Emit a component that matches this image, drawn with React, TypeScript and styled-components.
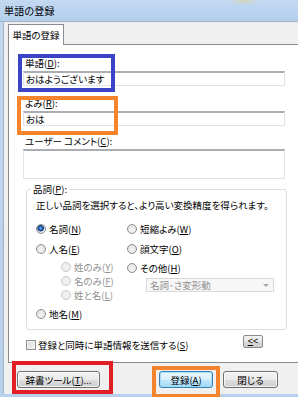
import React from "react";
import styled, { createGlobalStyle } from "styled-components";

const Global = createGlobalStyle`
  html, body { margin: 0; padding: 0; background: #fff; }
  body { font-family: "Noto Sans CJK JP", "Noto Sans", sans-serif; }
  * { box-sizing: border-box; }
`;

const Window = styled.div`
  position: relative;
  width: 298px;
  height: 397px;
  overflow: hidden;
  background: linear-gradient(180deg, #c3d8ef 0%, #b7d0ec 100%);
  display: flex;
  flex-direction: column;
  font-size: 9.5px;
  font-feature-settings: "palt";
  color: #000;
`;

const TitleBar = styled.div`
  height: 22px;
  flex: none;
  display: flex;
  align-items: center;
  padding-left: 4px;
  font-size: 10px;
  background:
    radial-gradient(ellipse 16px 4px at 244px 1px, rgba(226, 212, 160, 0.6), rgba(226, 212, 160, 0) 100%),
    linear-gradient(180deg, #c4d9f1 0%, #b9d3f0 60%, #b3cdeb 100%);
  border-bottom: 1px solid #9fb3c9;
  letter-spacing: 0.2px;
`;

const Client = styled.div`
  margin-left: 3px;
  flex: none;
  height: 372px;
  background: #f0f0f0;
  border-left: 1px solid #a3b3c4;
  display: flex;
  flex-direction: column;
  padding-left: 4px;
`;

const TabStrip = styled.div`
  height: 22px;
  display: flex;
  align-items: flex-end;
`;

const Tab = styled.div`
  width: 56px;
  height: 21px;
  background: #fff;
  border: 1px solid #898c95;
  border-bottom: none;
  margin-bottom: -1px;
  position: relative;
  z-index: 1;
  display: flex;
  align-items: center;
  justify-content: center;
  padding-bottom: 1px;
`;

const Panel = styled.div`
  height: 319px;
  background: #fff;
  border-top: 1px solid #898c95;
  border-left: 1px solid #898c95;
  border-bottom: 1px solid #898c95;
  padding: 11px 0 0 14px;
  display: flex;
  flex-direction: column;
`;

const FieldLabel = styled.div<{ $gapTop?: number }>`
  height: 14px;
  line-height: 14px;
  padding-left: 2px;
  margin-top: ${(p) => p.$gapTop ?? 0}px;
  margin-bottom: 1px;
`;

const TextInput = styled.div<{ $h?: number }>`
  width: 262px;
  height: ${(p) => p.$h ?? 15}px;
  background: #fff;
  border: 1px solid #e2e3ea;
  border-top-color: #abadb3;
  border-top-width: 2px;
  line-height: 12px;
  padding-left: 2px;
  font-size: 9.5px;
`;

const GroupBox = styled.fieldset`
  margin: 3px 0 0 3px;
  width: 261px;
  height: 148px;
  border: 1px solid #d5dfe5;
  border-radius: 3px;
  padding: 2px 0 0 9px;
  min-width: 0;
`;

const Legend = styled.legend`
  margin-left: -5px;
  padding: 0 2px;
  height: 14px;
  line-height: 14px;
`;

const Description = styled.div`
  line-height: 14px;
  height: 14px;
`;

const Columns = styled.div`
  display: flex;
  margin-top: 10px;
`;

const Column = styled.div<{ $w?: number }>`
  display: flex;
  flex-direction: column;
  width: ${(p) => (p.$w ? `${p.$w}px` : "auto")};
  flex: none;
`;

const OptionRow = styled.div<{ $top?: number; $indent?: number; $disabled?: boolean }>`
  display: flex;
  align-items: center;
  height: 14px;
  gap: 3px;
  margin-top: ${(p) => p.$top ?? 0}px;
  margin-left: ${(p) => p.$indent ?? 0}px;
  color: ${(p) => (p.$disabled ? "#8f8f8f" : "#000")};
`;

const RadioDot = styled.span<{ $checked?: boolean; $disabled?: boolean }>`
  width: 10px;
  height: 10px;
  border-radius: 50%;
  flex: none;
  border: 1px solid ${(p) => (p.$disabled ? "#c9c9c9" : "#8e8f91")};
  background: ${(p) =>
    p.$checked
      ? "radial-gradient(circle at 45% 40%, #8ac0f0 0, #2c6cc0 1.5px, #173f7e 3px, #e6e6e6 3.6px, #f4f4f4 100%)"
      : p.$disabled
      ? "radial-gradient(circle, #f3f3f3 0, #e9e9e9 100%)"
      : "radial-gradient(circle at 50% 60%, #f6f6f6 0, #dcdcdc 100%)"};
`;

const CheckBoxBox = styled.span`
  width: 10px;
  height: 10px;
  flex: none;
  border: 1px solid #8e8f91;
  background: linear-gradient(135deg, #dcdcdc 0%, #f4f4f4 100%);
  box-shadow: inset 0 0 0 1px #f3f3f3;
`;

const Select = styled.div`
  margin: 3px 0 0 19px;
  width: 128px;
  height: 14px;
  border: 1px solid #d9d9d9;
  background: #f7f7f7;
  color: #8f8f8f;
  display: flex;
  align-items: center;
  padding-left: 3px;
  justify-content: space-between;
  padding-right: 4px;
`;

const Arrow = styled.span`
  width: 0;
  height: 0;
  border-left: 3px solid transparent;
  border-right: 3px solid transparent;
  border-top: 3px solid #a8a8a8;
`;

const CheckRow = styled.div`
  display: flex;
  align-items: center;
  margin: 7px 0 0 3px;
  width: 237px;
  height: 16px;
  gap: 2px;
`;

const SmallButton = styled.div`
  margin-left: auto;
  align-self: flex-start;
  margin-top: -2px;
  width: 20px;
  height: 13px;
  border: 1px solid #8a8a8a;
  border-radius: 2px;
  background: linear-gradient(180deg, #f4f4f4 0%, #e8e8e8 50%, #d9d9d9 51%, #cdcdcd 100%);
  display: flex;
  align-items: center;
  justify-content: center;
  font-size: 9px;
  line-height: 9px;
  font-family: "Liberation Sans", sans-serif;
`;

const ButtonRow = styled.div`
  flex: 1;
  display: flex;
  align-items: flex-start;
  padding: 8px 20px 0 9px;
`;

const Button = styled.div<{ $w: number; $primary?: boolean; $left?: number }>`
  width: ${(p) => p.$w}px;
  height: 17px;
  margin-left: ${(p) => p.$left ?? 0}px;
  border-radius: 3px;
  border: 1px solid ${(p) => (p.$primary ? "#3c7fb1" : "#707070")};
  background: ${(p) =>
    p.$primary
      ? "linear-gradient(180deg, #eaf6fd 0%, #d9f0fc 50%, #bee6fd 51%, #a7d9f5 100%)"
      : "linear-gradient(180deg, #f2f2f2 0%, #ebebeb 50%, #dddddd 51%, #cfcfcf 100%)"};
  box-shadow: inset 0 0 0 1px ${(p) => (p.$primary ? "rgba(150,220,250,0.8)" : "rgba(255,255,255,0.7)")};
  display: flex;
  align-items: center;
  justify-content: center;
`;

const Mark = styled.div<{ $x: number; $y: number; $w: number; $h: number; $c: string }>`
  position: absolute;
  left: ${(p) => p.$x}px;
  top: ${(p) => p.$y}px;
  width: ${(p) => p.$w}px;
  height: ${(p) => p.$h}px;
  border: 4px solid ${(p) => p.$c};
  pointer-events: none;
`;

function Radio({
  label,
  checked,
  disabled,
  top,
  indent,
}: {
  label: React.ReactNode;
  checked?: boolean;
  disabled?: boolean;
  top?: number;
  indent?: number;
}) {
  return (
    <OptionRow $top={top} $indent={indent} $disabled={disabled}>
      <RadioDot $checked={checked} $disabled={disabled} />
      <span>{label}</span>
    </OptionRow>
  );
}

export default function App() {
  return (
    <>
      <Global />
      <Window>
        <TitleBar>単語の登録</TitleBar>
        <Client>
          <TabStrip>
            <Tab>単語の登録</Tab>
          </TabStrip>
          <Panel>
            <FieldLabel>
              単語(<u>D</u>):
            </FieldLabel>
            <TextInput>おはようございます</TextInput>
            <FieldLabel $gapTop={10}>
              よみ(<u>R</u>):
            </FieldLabel>
            <TextInput>おは</TextInput>
            <FieldLabel $gapTop={8}>
              ユーザー コメント(<u>C</u>):
            </FieldLabel>
            <TextInput $h={30} />
            <GroupBox>
              <Legend>
                品詞(<u>P</u>):
              </Legend>
              <Description>正しい品詞を選択すると、より高い変換精度を得られます。</Description>
              <Columns>
                <Column $w={91}>
                  <Radio checked label={<>名詞(<u>N</u>)</>} />
                  <Radio top={6} label={<>人名(<u>E</u>)</>} />
                  <Radio top={4} indent={25} disabled label={<>姓のみ(<u>Y</u>)</>} />
                  <Radio indent={25} disabled label={<>名のみ(<u>F</u>)</>} />
                  <Radio indent={25} disabled label={<>姓と名(<u>L</u>)</>} />
                  <Radio top={5} label={<>地名(<u>M</u>)</>} />
                </Column>
                <Column>
                  <Radio label={<>短縮よみ(<u>W</u>)</>} />
                  <Radio top={6} label={<>顔文字(<u>O</u>)</>} />
                  <Radio top={5} label={<>その他(<u>H</u>)</>} />
                  <Select>
                    <span>名詞･さ変形動</span>
                    <Arrow />
                  </Select>
                </Column>
              </Columns>
            </GroupBox>
            <CheckRow>
              <CheckBoxBox />
              <span>
                登録と同時に単語情報を送信する(<u>S</u>)
              </span>
              <SmallButton>
                <u>&lt;</u>&lt;
              </SmallButton>
            </CheckRow>
          </Panel>
          <ButtonRow>
            <Button $w={83}>
              辞書ツール(<u>T</u>)...
            </Button>
            <Button $w={54} $primary $left={59}>
              登録(<u>A</u>)
            </Button>
            <Button $w={55} $left={10}>
              閉じる
            </Button>
          </ButtonRow>
        </Client>
        <Mark $x={18} $y={54} $w={97} $h={38} $c="#3b43c6" />
        <Mark $x={17} $y={96} $w={101} $h={39} $c="#f5842c" />
        <Mark $x={12} $y={361} $w={101} $h={33} $c="#e21f27" />
        <Mark $x={152} $y={366} $w={68} $h={32} $c="#f5842c" />
      </Window>
    </>
  );
}
